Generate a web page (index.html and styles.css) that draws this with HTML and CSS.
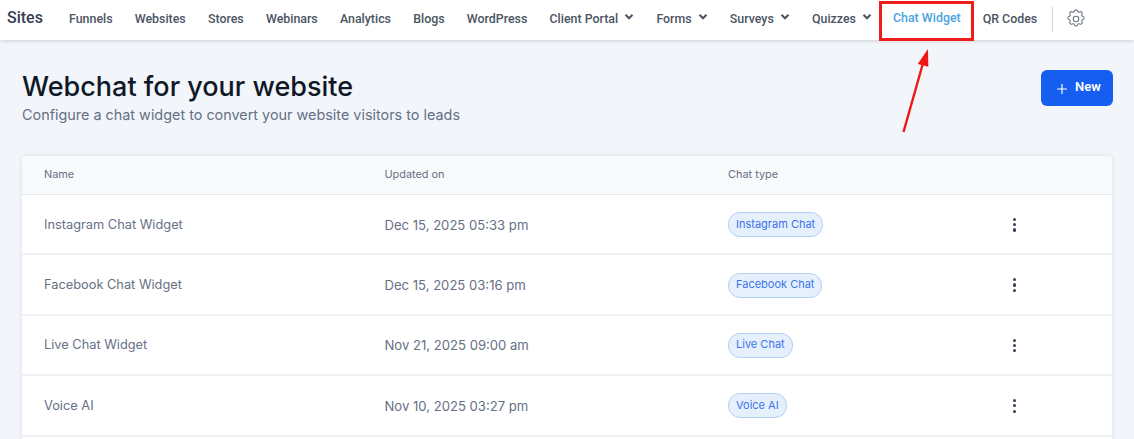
FILE: index.html
```html
<!DOCTYPE html>
<html lang="en">
<head>
<meta charset="utf-8">
<title>Webchat for your website</title>
<link rel="stylesheet" href="styles.css">
</head>
<body>
<header class="topbar">
  <span class="brand">Sites</span>
  <nav class="nav">
    <a class="nav-item">Funnels</a>
    <a class="nav-item">Websites</a>
    <a class="nav-item">Stores</a>
    <a class="nav-item">Webinars</a>
    <a class="nav-item">Analytics</a>
    <a class="nav-item">Blogs</a>
    <a class="nav-item">WordPress</a>
    <a class="nav-item">Client Portal<svg class="caret" viewBox="0 0 10 8"><path d="M1.5 1.8 5 5.3l3.5-3.5" /></svg></a>
    <a class="nav-item">Forms<svg class="caret" viewBox="0 0 10 8"><path d="M1.5 1.8 5 5.3l3.5-3.5" /></svg></a>
    <a class="nav-item">Surveys<svg class="caret" viewBox="0 0 10 8"><path d="M1.5 1.8 5 5.3l3.5-3.5" /></svg></a>
    <a class="nav-item last-caret">Quizzes<svg class="caret" viewBox="0 0 10 8"><path d="M1.5 1.8 5 5.3l3.5-3.5" /></svg></a>
    <a class="nav-item active">Chat Widget</a>
    <a class="nav-item qr">QR Codes</a>
    <span class="divider"></span>
    <svg class="gear" viewBox="0 0 24 24" fill="none" stroke="#6b7280" stroke-width="1.2" stroke-linecap="round" stroke-linejoin="round"><path d="M10.3 3.2c.4-1.6 2.9-1.6 3.3 0a1.7 1.7 0 0 0 2.6 1.1c1.5-.9 3.2.8 2.3 2.3a1.7 1.7 0 0 0 1.1 2.6c1.6.4 1.6 2.9 0 3.3a1.7 1.7 0 0 0-1.1 2.6c.9 1.5-.8 3.2-2.3 2.3a1.7 1.7 0 0 0-2.6 1.1c-.4 1.6-2.9 1.6-3.3 0a1.7 1.7 0 0 0-2.6-1.1c-1.5.9-3.2-.8-2.3-2.3a1.7 1.7 0 0 0-1.1-2.6c-1.6-.4-1.6-2.9 0-3.3a1.7 1.7 0 0 0 1.1-2.6c-.9-1.5.8-3.2 2.3-2.3a1.7 1.7 0 0 0 2.6-1.1Z"/><circle cx="12" cy="12" r="3"/></svg>
  </nav>
</header>

<main class="page">
  <div class="page-head">
    <div class="titles">
      <h1>Webchat for your website</h1>
      <p>Configure a chat widget to convert your website visitors to leads</p>
    </div>
    <button class="btn-new"><svg class="plus" viewBox="0 0 12 12"><path d="M6 1v10M1 6h10"/></svg>New</button>
  </div>

  <section class="table">
    <div class="row head"><span>Name</span><span>Updated on</span><span>Chat type</span><span></span></div>
    <div class="row">
      <span class="name">Instagram Chat Widget</span><span class="date">Dec 15, 2025 05:33 pm</span>
      <span><em class="tag">Instagram Chat</em></span>
      <span class="more"><i></i><i></i><i></i></span>
    </div>
    <div class="row">
      <span class="name">Facebook Chat Widget</span><span class="date">Dec 15, 2025 03:16 pm</span>
      <span><em class="tag">Facebook Chat</em></span>
      <span class="more"><i></i><i></i><i></i></span>
    </div>
    <div class="row">
      <span class="name">Live Chat Widget</span><span class="date">Nov 21, 2025 09:00 am</span>
      <span><em class="tag">Live Chat</em></span>
      <span class="more"><i></i><i></i><i></i></span>
    </div>
    <div class="row">
      <span class="name">Voice AI</span><span class="date">Nov 10, 2025 03:27 pm</span>
      <span><em class="tag">Voice AI</em></span>
      <span class="more"><i></i><i></i><i></i></span>
    </div>
  </section>
</main>

<div class="callout-box"></div>
<svg class="callout-arrow" viewBox="0 0 40 100"><path d="M6.5 91 25.5 24" fill="none" stroke="#f01616" stroke-width="2.4"/><path d="M31 8 20.7 23 31.3 25.7Z" fill="#f01616"/></svg>
</body>
</html>
```
FILE: styles.css
```css
* { box-sizing: border-box; }
html, body { margin: 0; height: 439px; overflow: hidden; }
body { background: #f2f6fa; font-family: Inter, sans-serif; position: relative; }

.topbar {
  height: 40px;
  background: #fff;
  box-shadow: 0 1px 4px rgba(16, 24, 40, .16);
  display: flex;
  align-items: center;
  padding-left: 7px;
  position: relative;
}
.brand {
  font: 500 16px/20px Roboto, sans-serif;
  color: #374151;
  width: 62px;
  margin-top: -5px;
}
.nav { display: flex; align-items: center; height: 40px; }
.nav-item {
  font: 500 12.4px/16px Roboto, sans-serif;
  color: #4b5563;
  margin-right: 22.2px;
  display: flex;
  align-items: center;
  height: 40px;
  white-space: nowrap;
  margin-top: -3px;
}
.nav-item.last-caret { margin-right: 13px; }
.nav-item.active {
  color: #4ba3e0;
  margin-right: 14px;
  height: 38px;
  margin-top: -1px;
  padding: 0 8px 2px;
  border-bottom: 1px solid #5fb4e6;
}
.nav-item.qr { margin-right: 15px; }
.caret {
  width: 10px;
  height: 8px;
  margin-left: 6px;
  margin-top: -3px;
  fill: none;
  stroke: #4b5563;
  stroke-width: 2;
}
.divider { width: 1px; height: 25px; background: #d1d5db; margin-right: 11.5px; margin-top: -2px; }
.gear { width: 22px; height: 22px; margin-top: -3px; }

.page { padding: 0 22px; }
.page-head {
  display: flex;
  justify-content: space-between;
  align-items: flex-start;
  height: 116px;
  padding-top: 30px;
}
.titles h1 {
  margin: 0;
  font: 500 27px/33px Inter, sans-serif;
  color: #101828;
}
.titles p {
  margin: 2px 0 0;
  font: 400 14.4px/20px Inter, sans-serif;
  color: #667085;
}
.btn-new {
  width: 72px;
  height: 36px;
  margin-right: -1px;
  border: 0;
  border-radius: 6px;
  background: #155eef;
  color: #fff;
  font: 600 13px/16px Roboto, sans-serif;
  display: flex;
  align-items: center;
  justify-content: center;
  gap: 7px;
  padding: 0 0 2px 3px;
}
.plus { width: 12px; height: 12px; fill: none; stroke: #fff; stroke-width: 1.2; margin-top: 3px; }

.table {
  background: #fff;
  border-radius: 4px 4px 0 0;
  box-shadow: 0 0 5px rgba(16, 24, 40, .1);
  padding-bottom: 20px;
}
.row {
  display: grid;
  grid-template-columns: 340.5px 343.5px 285px 1fr;
  align-items: center;
  height: 60.4px;
  padding: 1px 0 0 22px;
  border-bottom: 2px solid #f0f2f5;
  font: 400 13px/20px Inter, sans-serif;
  color: #667085;
}
.row.head {
  height: 39px;
  padding: 0 0 2px 22px;
  background: #f9fafb;
  border-bottom: 1px solid #e6e9ef;
  border-radius: 4px 4px 0 0;
  font-size: 10.9px;
}
.name { font-size: 12.8px; }
.date { font-size: 13.1px; }
.tag {
  display: inline-block;
  font: 400 11px/15px Inter, sans-serif;
  color: #3b74e8;
  background: #e6f0fd;
  border: 1px solid #b2cff5;
  border-radius: 12px;
  padding: 3.5px 7px;
  height: 25px;
  vertical-align: middle;
}
.more { display: flex; flex-direction: column; align-items: flex-start; gap: 2.2px; }
.more i { width: 3.2px; height: 3.2px; border-radius: 50%; background: #344054; display: block; }

.callout-box {
  position: absolute;
  left: 879px;
  top: 1px;
  width: 95px;
  height: 40px;
  border: 3px solid #ef1c1c;
}
.callout-arrow {
  position: absolute;
  left: 897px;
  top: 41px;
  width: 40px;
  height: 100px;
}
```
